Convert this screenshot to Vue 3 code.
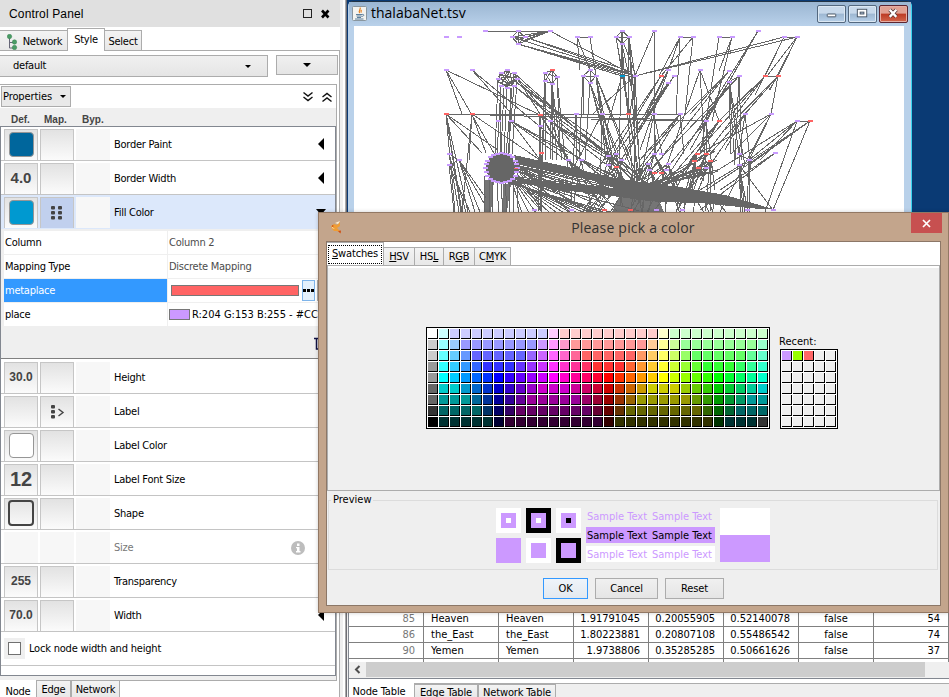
<script setup>
const topRows = [
  { name: 'Border Paint', kind: 'swatch', value: '#00669c' },
  { name: 'Border Width', kind: 'text', value: '4.0', size: 'mid' },
  { name: 'Fill Color', kind: 'swatch', value: '#0099d0', selected: true },
]
const bottomRows = [
  { name: 'Height', kind: 'text', value: '30.0' },
  { name: 'Label', kind: 'none', map: 'pass' },
  { name: 'Label Color', kind: 'swatch', value: '#ffffff' },
  { name: 'Label Font Size', kind: 'text', value: '12', size: 'big' },
  { name: 'Shape', kind: 'shape' },
  { name: 'Size', disabled: true },
  { name: 'Transparency', kind: 'text', value: '255' },
  { name: 'Width', kind: 'text', value: '70.0' },
]
const tableRows = [
  ['85', 'Heaven', 'Heaven', '1.91791045', '0.20055905', '0.52140078', 'false', '54'],
  ['86', 'the_East', 'the_East', '1.80223881', '0.20807108', '0.55486542', 'false', '74'],
  ['90', 'Yemen', 'Yemen', '1.9738806', '0.35285285', '0.50661626', 'false', '37'],
]

// Run-length encoded palette rows: "colour*count"
const palette = [
  'fff cff ccf*9 fcf fcc*9 ffc cfc*9',
  'ccc 9ff 9cf 99f*7 c9f f9f f9c f99*7 fc9 ff9 cf9 9f9*7 9fc',
  'ccc 6ff 6cf 69f 66f*5 96f c6f f6f f6c f69 f66*5 f96 fc6 ff6 cf6 9f6 6f6*5 6f9 6fc',
  '999 3ff 3cf 39f 36f 33f*3 63f 93f c3f f3f f3c f39 f36 f33*3 f63 f93 fc3 ff3 cf3 9f3 6f3 3f3*3 3f6 3f9 3fc',
  '999 0ff 0cf 09f 06f 03f 00f 30f 60f 90f c0f f0f f0c f09 f06 f03 f00 f30 f60 f90 fc0 ff0 cf0 9f0 6f0 3f0 0f0 0f3 0f6 0f9 0fc',
  '666 0cc*2 09c 06c 03c 00c 30c 60c 90c c0c*3 c09 c06 c03 c00 c30 c60 c90 cc0*3 9c0 6c0 3c0 0c0 0c3 0c6 0c9 0cc',
  '666 099*3 069 039 009 309 609 909*5 906 903 900 930 960 990*5 690 390 090 093 096 099*2',
  '333 066*4 036 006 306 606*7 603 600 630 660*7 360 060 063 066*3',
  '000 033*5 003 303*9 300 330*9 030 033*4 333',
].flatMap((r) => r.split(' ').flatMap((t) => {
  const [c, n] = t.split('*')
  return Array(Number(n || 1)).fill('#' + c)
})).filter((c, i) => i < 279)
palette[278] = '#333'
const recent = ['#cc99ff', '#99ff00', '#ff6666', ...Array(32).fill('#efefef')]

// Network nodes
const purple = [
  [446,37],[459,37],[485,31],[518,31],[550,31],[512,37],[525,37],[518,44],[577,37],[590,37],[622,31],[616,37],[629,37],[622,44],
  [446,70],[472,70],[507,70],[501,73],[514,73],[498,79],[517,79],[501,86],[514,86],[507,88],[545,73],[557,77],[545,81],[552,84],
  [590,70],[583,76],[596,76],[590,83],[635,76],[576,114],[602,114],[498,121],[511,121],[540,126],[550,121],
  [449,154],[459,160],[449,165],[568,160],[581,160],[608,156],[616,154],[621,160],[608,165],[534,210],[571,210],
  [654,31],[680,37],[693,37],[719,37],[732,37],[758,31],[784,37],[797,37],[668,70],[674,76],[668,83],[700,70],[729,71],[739,76],[729,82],
  [654,114],[680,114],[706,121],[745,114],[771,114],[797,121],[654,154],[661,154],[648,164],[668,164],[649,170],[666,170],[706,168],
  [739,154],[749,160],[739,165],[775,153],[656,210],[682,210],[747,210],[773,210],
]
const red = [
  [552,70],[446,114],[472,114],[540,115],[628,114],[541,153],[616,167],[604,210],[630,210],[661,76],[765,76],[778,76],[719,121],[810,121],
  [654,173],[661,173],[697,154],[706,154],[694,161],[710,161],[698,168],
]
const blue = [[622, 76]]
const ring = Array.from({ length: 24 }, (_, i) => {
  const a = (i / 24) * Math.PI * 2
  return [501 + 16 * Math.cos(a), 168 + 15 * Math.sin(a)]
})

// Fans: origin followed by its targets
const fans = [
  [485,31, 550,31], [518,31, 525,37, 550,31, 512,37, 518,44], [550,31, 525,37, 518,44, 512,37, 516,40, 635,76, 522,41],
  [512,37, 525,37, 518,44, 635,76], [525,37, 518,44, 635,76, 632,72], [518,44, 635,76, 635,78, 622,76],
  [577,37, 590,37, 590,70, 580,70], [590,37, 598,90, 602,114],
  [622,31, 616,37, 629,37, 622,44, 619,160], [616,37, 629,37, 622,44, 630,114, 640,180], [629,37, 622,44, 628,114, 635,76, 637,180],
  [622,44, 622,76, 633,180, 637,114], [629,38, 641,180], [624,44, 636,76],
  [622,76, 606,130], [635,76, 654,31, 797,37, 784,37, 634,180, 640,180, 630,114, 593,114],
  [654,31, 655,114, 655,154], [680,37, 693,37, 659,76, 676,114, 640,150], [693,37, 661,76, 685,114],
  [719,37, 732,37, 706,121], [732,37, 719,71, 712,121],
  [758,31, 735,71, 729,82, 715,100, 690,150], [784,37, 797,37, 765,76, 755,95], [797,37, 778,76, 770,90, 767,76],
  [446,70, 540,115, 462,114, 495,155], [472,70, 510,112, 580,160],
  [446,114, 680,114, 498,150, 455,212, 462,212, 468,212, 461,212, 482,153], [472,114, 469,160, 462,212, 486,153, 540,160],
  [489,115, 558,117], [558,117, 650,119], [590,119, 700,121], [650,119, 706,121],
  [449,154, 459,212, 459,160, 466,212], [449,165, 454,212, 470,212, 459,160], [459,160, 480,212, 486,198, 485,205, 475,212],
  [552,70, 545,73, 557,77, 545,81, 552,84], [545,73, 557,77, 552,84, 541,212], [557,77, 552,84, 565,160, 560,140],
  [545,81, 546,160, 543,114, 541,180], [552,84, 545,81, 553,160, 557,160, 550,160, 562,160],
  [590,70, 583,76, 596,76, 590,83], [583,76, 596,76, 590,83, 579,160, 583,115],
  [596,76, 590,83, 606,160, 612,155, 630,165, 639,180], [590,83, 602,114, 609,155, 585,160, 618,180],
  [576,114, 577,160, 571,200], [602,114, 600,200, 608,156, 616,154, 621,160, 575,165],
  [511,121, 568,155, 540,160, 580,170, 620,180], [550,121, 608,156, 568,160, 620,175], [540,115, 541,153, 538,212, 568,160, 608,156, 640,180],
  [541,153, 540,212],
  [700,70, 660,185, 719,121, 705,160], [668,70, 645,114, 625,160], [661,76, 610,160, 590,180], [674,76, 645,120, 618,165], [668,83, 640,130, 608,165, 625,150],
  [729,71, 690,114, 640,185, 650,150], [739,76, 700,121, 650,170, 729,82, 742,160, 735,160], [729,82, 739,154, 745,165, 735,165, 731,154, 700,130, 665,180],
  [765,76, 778,76, 719,121, 706,154, 690,160], [778,76, 745,114, 710,154, 771,114, 769,90, 725,130],
  [745,114, 700,180, 725,150, 739,154, 751,170], [771,114, 749,160, 720,212, 698,154, 731,154],
  [797,121, 810,121, 710,175, 760,160, 765,212, 749,160], [810,121, 740,170, 749,165, 773,210, 706,190],
  [739,154, 743,212, 741,212, 749,160, 745,212], [749,160, 750,212, 747,212, 700,190], [739,165, 741,212, 748,212, 773,210],
  [775,153, 700,210, 720,190], [680,114, 650,164, 684,154, 630,180, 640,160], [654,114, 640,180, 662,154, 656,154],
  [706,121, 640,200, 706,154, 715,190, 700,154], [719,121, 700,154, 660,190, 684,170],
]
let seed = 19
const rnd = () => ((seed = (seed * 16807) % 2147483647) / 2147483647)
const segs = []
fans.forEach(([x, y, ...t]) => {
  for (let i = 0; i < t.length; i += 2) segs.push([x, y, t[i], t[i + 1]])
})
// Parallel bundles hanging under the round clusters
;[[498,79,495],[501,86,497],[504,88,501],[507,88,504],[511,88,509],[514,86,508],[517,80,512],[501,86,500],[512,88,506]].forEach(([x, y, b]) => segs.push([x, y, b, 154]))
;[[514,73],[517,79],[514,86],[516,82]].forEach(([x, y], i) => segs.push([x, y, 568 + i * 14, 158 - i * 3], [x, y, 600 + i * 9, 150 + i * 6]))
// Chords inside the small round cluster
for (let i = 0; i < 22; i++) segs.push([507 + 9 * Math.cos(i), 79 + 8 * Math.sin(i), 507 + 9 * Math.cos(i * 2.3 + 2), 79 + 8 * Math.sin(i * 2.3 + 2)])
// Rays from the large hub
for (let i = 0; i < 24; i++) segs.push([515, 164 + rnd() * 16, 540 + rnd() * 110, 188 + rnd() * 25])
for (let i = 0; i < 14; i++) segs.push([508, 170 + i, 522 + i * 7, 213])
for (let i = 0; i < 9; i++) segs.push([485 + i * 4, 176, 484 + i * 4 + rnd() * 3, 213])
// Mesh between the middle row and the bottom
const mids = [[568,160],[581,160],[608,156],[616,154],[621,160],[648,164],[654,154],[668,164],[697,154],[706,154],[710,161]]
mids.forEach(([x, y]) => {
  for (let i = 0; i < 6; i++) segs.push([x, y, x * 0.7 + 640 * 0.3 + (rnd() - 0.5) * 60, 178 + rnd() * 34])
})
for (let i = 0; i < 24; i++) segs.push([600 + i * 5, 176 + i * 0.8, 575 + i * 6.5 + (rnd() - 0.5) * 30, 213])
for (let i = 0; i < 14; i++) segs.push([640 + i * 2, 185, 690 + rnd() * 30, 150 + rnd() * 22])
const edgePath = segs.map((s) => `M${s[0].toFixed(1)} ${s[1].toFixed(1)}L${s[2].toFixed(1)} ${s[3].toFixed(1)}`).join('')
</script>

<template>
  <div class="screen">
    <aside class="panel">
      <header class="panel-head">
        <span>Control Panel</span>
        <svg width="28" height="12" viewBox="0 0 28 12"><rect x="1.500" y="1.500" width="8" height="8" fill="none" stroke="#222" /><path d="M20 2.500l6.500 7M26.500 2.500l-6.500 7" stroke="#000" stroke-width="2.600" /></svg>
      </header>
      <nav class="tabs main-tabs">
        <span class="tab net"><svg width="11" height="16" viewBox="0 0 11 16"><path d="M2.500 3v11H7M2.500 8.500H7" fill="none" stroke="#667" /><g fill="#4a9c66" stroke="#34804d" stroke-width=".5"><circle cx="2.500" cy="2.500" r="2.200" /><circle cx="7.500" cy="8" r="2.200" /><circle cx="7.500" cy="13.500" r="2.200" /></g></svg>Network</span>
        <span class="tab on">Style</span>
        <span class="tab sel">Select</span>
      </nav>
      <div class="panel-body">
        <div class="style-row">
          <div class="combo">default<i class="down"></i></div>
          <div class="menu-btn"><i class="down wide"></i></div>
        </div>
        <section class="props">
          <div class="props-bar">
            <div class="props-btn">Properties<i class="down"></i></div>
            <svg class="chev" width="32" height="12" viewBox="0 0 32 12" fill="none" stroke="#111" stroke-width="1.400"><path d="M1.500 1.500l4.500 3.500 4.500-3.500M1.500 6l4.500 3.500L10.500 6M20.500 6l4.500-3.500L29.500 6M20.500 10.500l4.500-3.500 4.500 3.500" /></svg>
          </div>
          <div class="cols"><b>Def.</b><b>Map.</b><b>Byp.</b></div>
          <div class="list">
            <div v-for="r in topRows" :key="r.name" class="row" :class="{ picked: r.selected }">
              <div class="cell"><span v-if="r.kind === 'swatch'" class="chip" :style="{ background: r.value }"></span><b v-else :class="r.size">{{ r.value }}</b></div>
              <div class="cell" :class="{ mapped: r.selected }"><svg v-if="r.selected" width="12" height="14" viewBox="0 0 12 14" fill="#444"><rect x="0" y="0" width="4" height="3.500" rx="1" /><rect x="0" y="5" width="4" height="3.500" rx="1" /><rect x="0" y="10" width="4" height="3.500" rx="1" /><rect x="7" y="0" width="4" height="3.500" rx="1" /><rect x="7" y="5" width="4" height="3.500" rx="1" /><rect x="7" y="10" width="4" height="3.500" rx="1" /></svg></div>
              <div class="cell flat"></div>
              <span class="label">{{ r.name }}</span>
              <i v-if="r.selected" class="down open"></i><i v-else class="left"></i>
            </div>
            <div class="mapping">
              <div class="mrow"><span>Column</span><span class="dim">Column 2</span></div>
              <div class="mrow"><span>Mapping Type</span><span class="dim">Discrete Mapping</span></div>
              <div class="mrow hot"><span>metaplace</span><span class="edit"><i class="bar"></i><i class="dots"><svg width="11" height="3" viewBox="0 0 11 3"><path d="M0 0h3v3H0zM4 0h3v3H4zM8 0h3v3H8z" /></svg></i><i class="del"></i></span></div>
              <div class="mrow"><span>place</span><span class="val"><i class="sw"></i>R:204 G:153 B:255 - #CC...</span></div>
              <svg class="trash" width="12" height="13" viewBox="0 0 12 13" fill="none" stroke="#114" stroke-width="1.500"><path d="M0 1.500h12M2.500 2v10h7V2" /><path d="M4 4h2v7H4z" fill="#8cc4ee" stroke="none" /></svg>
            </div>
            <div v-for="r in bottomRows" :key="r.name" class="row">
              <div class="cell" :class="{ flat: r.disabled }"><span v-if="r.kind === 'swatch'" class="chip" :style="{ background: r.value }"></span><span v-else-if="r.kind === 'shape'" class="chip shape"></span><b v-else :class="r.size">{{ r.value }}</b></div>
              <div class="cell" :class="{ flat: r.disabled }"><svg v-if="r.map" width="15" height="14" viewBox="0 0 15 14" fill="#444"><rect x="1" y="0" width="4" height="3.500" rx="1" /><rect x="1" y="5" width="4" height="3.500" rx="1" /><rect x="1" y="10" width="4" height="3.500" rx="1" /><path d="M8.500 4l4.500 3.500-4.500 3.500" fill="none" stroke="#444" stroke-width="1.400" /></svg></div>
              <div class="cell flat"></div>
              <span class="label" :class="{ off: r.disabled }">{{ r.name }}</span>
              <svg v-if="r.disabled" class="info" width="14" height="14" viewBox="0 0 14 14"><circle cx="7" cy="7" r="7" fill="#bdbdbd" /><path d="M6 2.500h2.500V5H6zM5 6h3.500v4h1v1.500H5V10h1V7.300H5z" fill="#fff" /></svg>
              <i v-else class="left"></i>
            </div>
            <div class="lock"><span class="box-bg"><span class="box"></span></span><span class="lock-text">Lock node width and height</span></div>
          </div>
        </section>
      </div>
      <nav class="tabs foot-tabs"><span class="tab on">Node</span><span class="tab">Edge</span><span class="tab">Network</span></nav>
    </aside>
    <div class="splitter"></div>
    <main class="desk">
      <div class="mdi">
        <div class="frame">
          <div class="frame-head">
            <svg class="java" width="15" height="15" viewBox="0 0 15 15"><rect x=".5" y=".5" width="14" height="14" rx="1" fill="#f3f3f0" stroke="#89969f" /><path d="M8 1.500c1.500 2-2.500 3 0 5.500M9.500 4c-1 1-.8 1.500 0 2.500" fill="none" stroke="#e58325" stroke-width="1.200" /><path d="M4 8.500h6M4.500 10h5M5 11.500h4M3 13h8.500M10 8.500c3-.5 2 2-.5 2" fill="none" stroke="#5b7e9c" /></svg>
            <span class="frame-title">thalabaNet.tsv</span>
            <span class="wbtn"><svg width="27" height="16" viewBox="0 0 28 17"><rect x="9.500" y="8.500" width="9" height="3" rx=".5" fill="#fff" stroke="#485463" /></svg></span>
            <span class="wbtn"><svg width="27" height="16" viewBox="0 0 28 17"><rect x="8.500" y="3.500" width="10" height="8" fill="#fff" stroke="#485463" /><rect x="11.500" y="6.500" width="4" height="2" fill="#a9bfd8" stroke="#485463" /></svg></span>
            <span class="wbtn red"><svg width="27" height="16" viewBox="0 0 28 17"><path d="M10 4l7 7.500M17 4l-7 7.500" stroke="#4a3030" stroke-width="4" /><path d="M10 4l7 7.500M17 4l-7 7.500" stroke="#fff" stroke-width="2.500" /></svg></span>
          </div>
          <svg class="graph" width="550" height="187" viewBox="354 26 550 187" shape-rendering="crispEdges">
            <path :d="edgePath" fill="none" stroke="#666" stroke-width="1" />
            <path d="M514 155L568 167L610 177L640 182L680 187L725 195L773 209L760 209L700 203L660 202L640 200L612 196L570 191L517 183L517 178L570 185L615 188L590 180L560 174L516 164z" fill="#666" />
            <path d="M626 184h26l12 28h-52zM485 180h9l-3 32h-7zM503 184h8l-4 28h-5z" fill="#666" fill-opacity=".9" />
            <ellipse cx="501" cy="168" rx="15" ry="15" fill="#666" />
            <g fill="#c99bff"><rect v-for="(n, i) in purple.concat(ring)" :key="i" :x="Math.round(n[0]) - 2" :y="Math.round(n[1]) - 1" width="5" height="2" /></g>
            <g fill="#ff6464"><rect v-for="(n, i) in red" :key="i" :x="n[0] - 2" :y="n[1] - 1" width="5" height="2" /><rect x="514" y="168" width="4" height="1" /></g>
            <g fill="#0099d0"><rect v-for="(n, i) in blue" :key="i" :x="n[0] - 2" :y="n[1] - 1" width="5" height="2" /></g>
          </svg>
        </div>
      </div>
      <div class="data">
        <div class="grid">
          <template v-for="(r, i) in tableRows" :key="i"><span v-for="(c, j) in r" :key="j" class="td" :class="['c' + j, 'r' + i]">{{ c }}</span></template>
          <span v-for="j in 8" :key="'e' + j" class="td rest"></span>
        </div>
        <div class="scroll"><svg width="17" height="15" viewBox="0 0 17 15"><path d="M10.500 4L7 7.500l3.500 3.500" fill="none" stroke="#505050" stroke-width="2" /></svg><div class="thumb"></div></div>
        <nav class="tabs data-tabs"><span class="tab on">Node Table</span><span class="tab">Edge Table</span><span class="tab">Network Table</span></nav>
      </div>
    </main>

    <div class="dialog">
      <div class="dlg-head">
        <svg class="fox" width="12" height="13" viewBox="0 0 12 13"><path d="M1 5l3-2 3 1 3-3v4L7 7l3 3 1 2-4-2-3 0-2-2z" fill="#ef9d35" /><path d="M5 2l5-2-2 3zM2 6l3 2-3-1z" fill="#fff0cf" /><path d="M8 10l3-.5-.5 3zM2 4l2 1-2 1z" fill="#cc4c16" /></svg>
        <span class="dlg-title">Please pick a color</span>
        <span class="dlg-close"><svg width="9" height="9" viewBox="0 0 9 9"><path d="M1 1l7 7M8 1L1 8" stroke="#fff" stroke-width="1.700" /></svg></span>
      </div>
      <div class="dlg-body">
        <nav class="tabs dlg-tabs"><span class="tab on"><span><u>S</u>watches</span></span><span class="tab"><u>H</u>SV</span><span class="tab">HS<u>L</u></span><span class="tab">R<u>G</u>B</span><span class="tab">C<u>M</u>YK</span></nav>
        <div class="pane">
          <div class="cells all"><i v-for="(c, i) in palette" :key="i" :style="{ background: c }"></i></div>
          <div class="recent"><span>Recent:</span><div class="cells few"><i v-for="(c, i) in recent" :key="i" :style="{ background: c }"></i></div></div>
        </div>
        <fieldset class="preview">
          <legend>Preview</legend>
          <div class="squares">
            <i class="s w"><i class="m p"><i class="t w"></i></i></i><i class="s k"><i class="m p"><i class="t w"></i></i></i><i class="s w"><i class="m p"><i class="t k"></i></i></i>
            <i class="s p"></i><i class="s w"><i class="m p"></i></i><i class="s k"><i class="m p"></i></i>
          </div>
          <div class="samples">
            <div><span>Sample Text</span><span>Sample Text</span></div>
            <div class="p dark"><span>Sample Text</span><span>Sample Text</span></div>
            <div class="w"><span>Sample Text</span><span>Sample Text</span></div>
          </div>
          <div class="halves"><i class="w"></i><i class="p"></i></div>
        </fieldset>
        <div class="actions"><button class="ok">OK</button><button class="cancel">Cancel</button><button class="reset">Reset</button></div>
      </div>
    </div>
  </div>
</template>

<style>
body { margin: 0; overflow: hidden; }
</style>

<style scoped>
* { box-sizing: border-box; }
i { font-style: normal; }
svg { display: block; flex: none; }
.screen { position: relative; display: flex; width: 949px; height: 697px; overflow: hidden; background: #efefef; color: #000; font: 11px/14px "DejaVu Sans Condensed", "DejaVu Sans", sans-serif; font-stretch: condensed; letter-spacing: -0.25px; white-space: nowrap; }
.panel { width: 340px; height: 697px; display: flex; flex-direction: column; background: #fff; flex: none; }
.panel-head { height: 27px; width: 343px; background: #e0e0e0; display: flex; align-items: center; justify-content: space-between; padding: 0 13px 0 9px; font: 12px "Liberation Sans", sans-serif; letter-spacing: 0.15px; flex: none; }
.tabs { display: flex; align-items: flex-end; }
.tab { background: linear-gradient(#f3f3f3, #e8e8e8); border: 1px solid #acacac; border-bottom: 0; display: flex; align-items: center; justify-content: center; }
.tab.on { background: #fff; }
.main-tabs { height: 24px; border-bottom: 1px solid #acacac; flex: none; }
.main-tabs .tab { height: 20px; width: 38px; padding-top: 2px; }
.main-tabs .net { width: 67px; gap: 5px; border-left: 0; border-right: 0; padding-left: 2px; }
.main-tabs .on { height: 23px; margin-bottom: -1px; padding-bottom: 2px; }
.main-tabs .sel { width: 37px; border-left: 0; }
.panel-body { height: 630px; border-right: 1px solid #acacac; padding-top: 4px; flex: none; }
.style-row { display: flex; justify-content: space-between; height: 29px; padding-right: 1px; }
.combo { width: 268px; height: 22px; border: 1px solid #acacac; border-left: 0; background: linear-gradient(#f0f0f0, #e5e5e5); display: flex; align-items: center; justify-content: space-between; padding: 0 16px 0 13px; }
.menu-btn { width: 62px; height: 20px; border: 1px solid #acacac; background: linear-gradient(#f0f0f0, #e5e5e5); display: flex; align-items: center; justify-content: center; }
.down { border: 3px solid transparent; border-top-color: #000; border-bottom: 0; flex: none; }
.down.wide { border-width: 4px 4px 0; }
.left { border: 6px solid transparent; border-right-color: #000; border-left: 0; margin-left: auto; margin-right: 11px; }
.down.open { border-width: 6px 5px 0; margin-left: auto; margin-right: 9px; }
.props { width: 337px; height: 597px; border-top: 1px solid #acacac; border-right: 1px solid #acacac; border-bottom: 1px solid #acacac; background: #efefef; }
.props-bar { height: 23px; display: flex; align-items: center; justify-content: space-between; padding: 0 2px 0 1px; background: #fff; }
.props-btn { width: 70px; height: 21px; border: 1px solid #acacac; background: #e9e9e9; display: flex; align-items: center; justify-content: space-between; padding: 0 4px 0 1px; letter-spacing: -0.1px; }
.cols { display: flex; height: 18px; padding: 5px 0 0 11px; color: #444; font: 10px/14px "Liberation Sans", sans-serif; letter-spacing: 0; }
.cols b { width: 36px; }
.cols b + b { width: 38px; margin-left: -3px; margin-right: 3px; }
.list { height: 550px; width: 336px; border: 1px solid #828790; background: #fff; }
.row { height: 34px; display: flex; align-items: center; border-bottom: 1px solid #c4c4c4; padding-left: 3px; }
.row.picked { background: #dce8fb; border-bottom-color: #dce8fb; }
.cell { width: 34px; height: 31px; margin: 2px 2px 0 0; padding-bottom: 1px; border: 1px solid #c6c6c6; border-bottom: 0; background: linear-gradient(#e2e2e2, #fbfbfb); display: flex; align-items: center; justify-content: center; color: #444; font: 12px "Liberation Sans", sans-serif; letter-spacing: 0; flex: none; }
.cell.flat { background: #f7f7f7; border-color: #f7f7f7; }
.cell.mapped { background: #c1d0ee; }
.cell b { padding-bottom: 1px; font-family: "DejaVu Sans Condensed", "DejaVu Sans", sans-serif; font-family: "Liberation Sans", sans-serif; }
.cell .mid { font-size: 15px; padding-bottom: 2px; }
.cell .big { font-size: 20px; padding-bottom: 0; }
.chip { width: 25px; height: 25px; margin-bottom: 1px; border: 1px solid #969696; border-radius: 4px; }
.chip.shape { border: 2px solid #444; width: 26px; height: 26px; }
.label { padding: 2px 0 0 2px; }
.label.off { color: #777; }
.info { margin-left: auto; margin-right: 30px; margin-top: 2px; }
.mapping { height: 130px; background: #efefef; border-bottom: 1px solid #808080; padding: 2px 0 0 3px; margin-bottom: 1px; }
.mrow { display: flex; height: 23px; margin-bottom: 1px; gap: 1px; }
.mrow > span { background: #fff; width: 163px; padding-left: 1px; display: flex; align-items: center; }
.mrow > .dim { color: #4c4c4c; }
.mrow.hot > span:first-child { background: #3399ff; color: #fff; }
.mrow > .edit { padding-left: 3px; }
.bar { width: 128px; height: 11px; background: #ff6464; border: 1px solid #777; }
.dots { width: 13px; height: 21px; margin-left: 3px; border: 1px solid #7eb4ea; background: #e3f0fc; display: flex; align-items: center; justify-content: center; }
.del { width: 14px; height: 21px; margin-left: 2px; border: 1px solid #acacac; background: #e5e5e5; }
.sw { width: 21px; height: 11px; border: 1px solid #777; background: #cc99ff; margin-right: 2px; flex: none; }
.mrow > .val { letter-spacing: 0; }
.trash { margin: 11px 0 0 310px; }
.lock { height: 34px; display: flex; align-items: center; border-bottom: 1px solid #c4c4c4; padding-left: 3px; letter-spacing: -0.2px; }
.lock-text { padding-top: 1px; }
.box-bg { width: 21px; height: 21px; background: #efefef; display: flex; align-items: center; justify-content: center; margin-right: 4px; }
.box { width: 13px; height: 13px; border: 1px solid #707070; background: #fff; }
.foot-tabs { height: 17px; align-items: flex-start; margin-top: -1px; border-right: 1px solid #acacac; }
.foot-tabs .tab { height: 18px; width: 35px; }
.foot-tabs .on { border-color: #fff; width: 36px; padding-top: 4px; }
.foot-tabs .tab:last-child { width: 49px; }
.splitter { width: 7px; background: linear-gradient(90deg, #efefef 0 3px, #fff 3px 5px, #aaa 5px 6px, #6e6e75 6px); flex: none; }
.desk { width: 602px; display: flex; flex-direction: column; }
.mdi { height: 613px; background: #0a3a74; padding: 1px 0 0 1px; flex: none; }
.frame { width: 564px; height: 400px; background: #b9d1ea; border: 1px solid #b9d1ea; border-top-color: #234; border-right-color: #38d3ee; border-radius: 5px 5px 0 0; padding: 0 5px; }
.frame-head { height: 24px; display: flex; align-items: center; gap: 2px; background: linear-gradient(#9bb6d2, #b9d1ea); margin: 0 -5px; padding: 0 3px; }
.java { margin: -2px 2px 0 0; }
.frame-title { font: 14px "Open Sans", sans-serif; letter-spacing: 0; margin: -3px auto 0 0; }
.wbtn { width: 29px; height: 18px; margin-top: -1px; border: 1px solid #53687f; border-radius: 2px; background: linear-gradient(#c8d9eb 0 45%, #9db7d2 50%, #b7d0e9); box-shadow: inset 0 0 0 1px #dce8f3; }
.wbtn.red { background: linear-gradient(#e1a193 0 45%, #bd3b24 50%, #d2664c); border-color: #5c2530; box-shadow: inset 0 0 0 1px #e5ada3; }
.wbtn + .wbtn { margin-left: 0; }
.graph { background: #fff; width: 550px; }
.data { height: 84px; background: #fff; border-left: 1px solid #828790; margin-left: 1px; }
.grid { display: grid; grid-template-columns: repeat(8, 75px); grid-template-rows: 14px 16px 16px 3px; }
.td { border-right: 1px solid #808080; border-bottom: 1px solid #808080; line-height: 15px; display: flex; align-items: center; justify-content: flex-end; padding-right: 8px; letter-spacing: 0; }
.td.r0 { padding-bottom: 2px; }
.td.c0 { color: #777; }
.td.c1, .td.c2 { justify-content: flex-start; padding-left: 7px; }
.td.c6 { justify-content: center; padding-right: 0; }
.td.rest { border-bottom: 0; }
.scroll { height: 17px; display: flex; background: #efefef; border-bottom: 1px solid #828790; align-items: flex-start; }
.thumb { width: 559px; height: 15px; background: #cdcdcd; }
.data-tabs { height: 14px; margin-top: 4px; border-top: 1px solid #acacac; background: #efefef; align-items: flex-start; letter-spacing: -0.15px; line-height: 13px; }
.data-tabs .tab { width: 64px; height: 14px; padding-top: 1px; }
.data-tabs .on { width: 65px; height: 15px; margin-top: -1px; border: 0; padding-top: 3px; line-height: 12px; padding-right: 5px; }
.data-tabs .tab:last-child { width: 78px; }
.dialog { position: absolute; left: 318px; top: 212px; width: 631px; height: 401px; background: #c3a58c; border: 1px solid #927864; padding: 0 7px; box-shadow: 0 0 4px rgba(0, 0, 0, 0.2); }
.dlg-head { height: 28px; display: flex; align-items: flex-start; justify-content: space-between; }
.fox { margin: 8px 0 0 4px; }
.dlg-title { font: 14px/30px "Open Sans", sans-serif; color: #333; letter-spacing: 0.2px; padding-left: 13px; }
.dlg-close { width: 31px; height: 20px; margin-right: -1px; background: #c75050; display: flex; align-items: center; justify-content: center; }
.dlg-body { height: 365px; border: 1px solid #8c7767; background: #efefef; }
.dlg-tabs { height: 23px; background: #fff; letter-spacing: -0.3px; }
.dlg-tabs .tab { height: 18px; width: 29px; border-left: 0; }
.dlg-tabs .on { width: 57px; height: 23px; padding-top: 1px; }
.dlg-tabs .on span { border: 1px dotted #000; height: 19px; width: 54px; text-align: center; line-height: 15px; letter-spacing: -0.15px; }
.dlg-tabs .tab:nth-child(2), .dlg-tabs .tab:nth-child(4) { width: 31px; }
.dlg-tabs .tab:last-child { width: 36px; }
.pane { height: 226px; border: 1px solid #acacac; box-shadow: inset 0 2px #fff; display: flex; align-items: flex-start; padding: 61px 0 0 98px; gap: 10px; }
.cells { display: grid; gap: 1px; padding: 1px; border: 1px solid #000; background: #fff; }
.cells i { width: 10px; height: 10px; border-right: 1px solid #000; border-bottom: 1px solid #000; }
.all { grid-template-columns: repeat(31, 10px); }
.few { grid-template-columns: repeat(5, 10px); }
.recent { padding-top: 8px; }
.recent span { display: block; margin-left: -1px; letter-spacing: 0; }
.preview { margin: 2px 2px 0 1px; padding: 1px 0 0 167px; height: 77px; border: 1px solid #dcdcdc; display: flex; min-width: 0; }
.preview legend { padding: 0 2px; margin-left: -165px; letter-spacing: 0; }
.squares { display: grid; grid-template-columns: repeat(3, 25px); grid-template-rows: 25px 25px; gap: 5px; }
.w { background: #fff; }
.k { background: #000; }
.p { background: #cc99ff; }
.s, .m { display: flex; align-items: center; justify-content: center; }
.m { width: 15px; height: 15px; }
.t { width: 5px; height: 5px; }
.samples { display: flex; flex-direction: column; gap: 3px; margin: 0 5px; color: #cc99ff; letter-spacing: 0; }
.samples div { width: 129px; height: 16px; line-height: 18px; display: flex; justify-content: space-between; padding: 0 3px 0 1px; }
.samples .dark { color: #000; }
.halves i { display: block; width: 50px; height: 27px; }
.actions { display: flex; gap: 7px; padding: 8px 0 0 216px; }
button { height: 21px; padding: 0; border: 1px solid #acacac; background: linear-gradient(#f0f0f0, #e5e5e5); font: inherit; letter-spacing: -0.15px; }
.ok { width: 45px; border-color: #3399ff; background: linear-gradient(#eff4fa, #e3e9ef); }
.cancel { width: 63px; }
.reset { width: 59px; }
</style>
